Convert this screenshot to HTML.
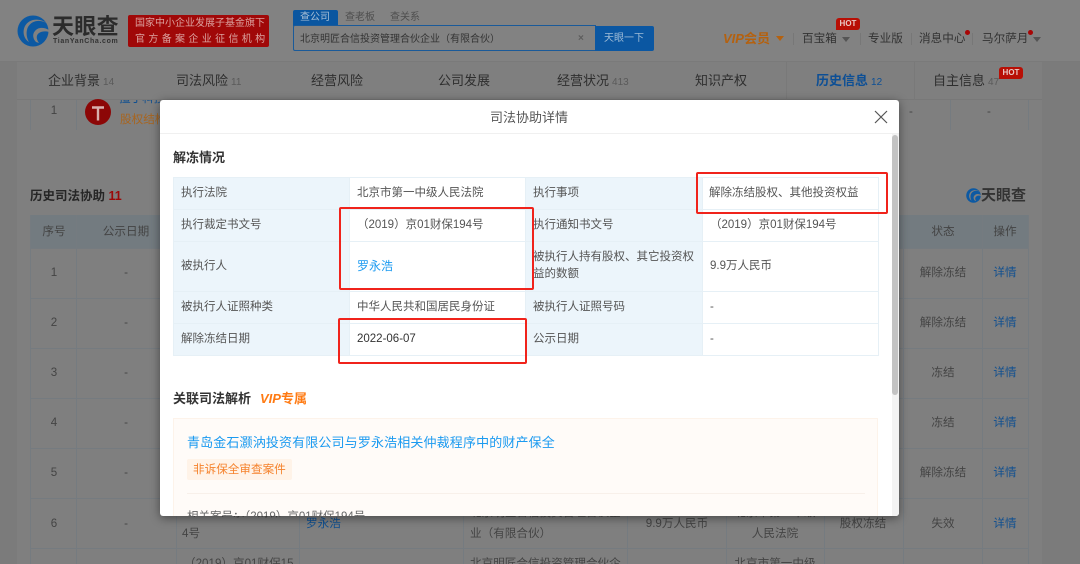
<!DOCTYPE html>
<html lang="zh-CN"><head><meta charset="utf-8"><title>司法协助详情</title>
<style>
*{box-sizing:border-box}
html,body{margin:0;padding:0;background:#f1f1f1}
body{width:1080px;height:564px;overflow:hidden;position:relative;font-family:"Liberation Sans","Noto Sans CJK SC",sans-serif;color:#2e2e2e}
#root{position:absolute;left:0;top:0;width:1080px;height:564px;overflow:hidden;background:#f1f1f1}
.a{position:absolute}
.t{position:absolute;white-space:nowrap;line-height:20px;height:20px;font-size:11.6px;margin-top:1px}
.c{transform:translateX(-50%)}
.l{position:absolute;background:#757b80}
.n{font-size:13px;color:#2e2e2e}
.n small{font-size:10px;color:#5a5a5a;margin-left:3px}
.m{color:#444}
.lk{color:#0f4f90}
.box{position:absolute;border:2px solid #f0231b;border-radius:2px}
.cell{position:absolute;border:1px solid #e6f0f6;font-size:11.5px;color:#555;display:flex;align-items:center;line-height:20px;padding:0 0 1px 7px}
.lab{background:#ecf5fb}
.hot{position:absolute;background:#b80f05;color:#e8c9c5;font-size:8px;font-weight:bold;line-height:12px;height:12px;width:24px;text-align:center;border-radius:3px 3px 3px 0}
.sep{position:absolute;width:1px;height:12px;background:#777;top:33px}
.tri{position:absolute;width:0;height:0;border-left:4px solid transparent;border-right:4px solid transparent;border-top:5px solid #555}
</style></head><body><div id="root">

<!-- page base under the dimming mask -->
<div class="a" style="left:17px;top:62px;width:1025px;height:502px;background:#f9f9f9"></div>
<div class="a" style="left:0;top:0;width:1080px;height:62px;background:#ffffff"></div>
<div class="a" style="left:0;top:0;width:1080px;height:564px;background:rgba(0,0,0,.49)"></div>
<div class="a" style="left:0;top:61px;width:1080px;height:1px;background:#7a7a7a"></div>
<div class="a" style="left:17px;top:99px;width:1025px;height:1px;background:#787878"></div>

<!-- logo -->
<svg class="a" style="left:17px;top:15px" width="32" height="32" viewBox="0 0 32 32">
<circle cx="16" cy="16" r="15.5" fill="#0c59a3"/>
<path d="M31 9C24 4 15 5 11 12c-2 4-2 10 1 15 -5-3-7-10-4-16C12 4 22 2 31 9z" fill="#818181"/>
<path d="M32 15c-5-3-11-3-14 1-3 3-2 8 1 11l3 1c-3-4-3-8 0-10 3-2 7-2 10-1z" fill="#818181"/>
</svg>
<div class="t" style="left:52px;top:15px;font-size:22px;line-height:22px;height:22px;font-weight:bold;color:#2b2b2b;letter-spacing:.3px">天眼查</div>
<div class="t" style="left:53px;top:31px;font-size:7px;font-weight:bold;color:#333;letter-spacing:.65px">TianYanCha.com</div>
<div class="a" style="left:128px;top:15px;width:141px;height:32px;background:#a00808;border-radius:2px"></div>
<div class="t" style="left:135px;top:13px;font-size:10px;color:#dca3a0">国家中小企业发展子基金旗下</div>
<div class="t" style="left:135px;top:29px;font-size:10px;color:#dca3a0;letter-spacing:3.35px">官方备案企业征信机构</div>

<!-- search -->
<div class="a" style="left:293px;top:10px;width:45px;height:16px;background:#0a56a0;border-radius:2px 2px 0 0"></div>
<div class="t" style="left:300px;top:7px;font-size:10px;color:#a9c0d6">查公司</div>
<div class="t" style="left:345px;top:7px;font-size:10px;color:#4e4e4e">查老板</div>
<div class="t" style="left:390px;top:7px;font-size:10px;color:#4e4e4e">查关系</div>
<div class="a" style="left:293px;top:25px;width:303px;height:26px;border:1px solid #1a5a99;border-radius:2px 0 0 2px;background:#828282"></div>
<div class="t" style="left:300px;top:29px;font-size:10px;color:#333">北京明匠合信投资管理合伙企业（有限合伙）</div>
<div class="t" style="left:578px;top:28px;font-size:10px;color:#5d5d5d;font-weight:bold">×</div>
<div class="a" style="left:595px;top:26px;width:59px;height:25px;background:#0b57a2;border-radius:0 2px 2px 0"></div>
<div class="t" style="left:604px;top:28px;font-size:10px;color:#9ebbd6">天眼一下</div>

<!-- header right -->
<div class="t" style="left:723px;top:28px;font-size:13px;font-weight:bold;color:#b4610f"><i>VIP</i>会员</div>
<div class="tri" style="left:776px;top:36px;border-top-color:#b4610f"></div>
<div class="sep" style="left:793px"></div>
<div class="t" style="left:802px;top:28px;color:#333">百宝箱</div>
<div class="tri" style="left:842px;top:37px"></div>
<div class="hot" style="left:836px;top:18px">HOT</div>
<div class="sep" style="left:860px"></div>
<div class="t" style="left:868px;top:28px;color:#333">专业版</div>
<div class="sep" style="left:911px"></div>
<div class="t" style="left:919px;top:28px;color:#333">消息中心</div>
<div class="a" style="left:965px;top:30px;width:5px;height:5px;border-radius:50%;background:#a80505"></div>
<div class="sep" style="left:972px"></div>
<div class="t" style="left:982px;top:28px;color:#333">马尔萨月</div>
<div class="a" style="left:1028px;top:30px;width:5px;height:5px;border-radius:50%;background:#a80505"></div>
<div class="tri" style="left:1033px;top:37px"></div>

<!-- nav -->
<div class="t n" style="left:48px;top:70px">企业背景<small>14</small></div>
<div class="t n" style="left:176px;top:70px">司法风险<small>11</small></div>
<div class="t n" style="left:311px;top:70px">经营风险</div>
<div class="t n" style="left:438px;top:70px">公司发展</div>
<div class="t n" style="left:557px;top:70px">经营状况<small>413</small></div>
<div class="t n" style="left:695px;top:70px">知识产权</div>
<div class="t n" style="left:816px;top:70px;font-weight:bold;color:#0d4f95">历史信息<small style="color:#0d4f95;font-weight:normal">12</small></div>
<div class="t n" style="left:933px;top:70px">自主信息<small>47</small></div>
<div class="hot" style="left:999px;top:67px">HOT</div>
<div class="l" style="left:786px;top:62px;width:1px;height:38px;background:#797979"></div>
<div class="l" style="left:914px;top:62px;width:1px;height:38px;background:#797979"></div>

<!-- top table fragment -->
<div class="l" style="left:30px;top:100px;width:1px;height:30px"></div>
<div class="l" style="left:76px;top:100px;width:1px;height:30px"></div>
<div class="l" style="left:950px;top:100px;width:1px;height:30px"></div>
<div class="l" style="left:1028px;top:100px;width:1px;height:30px"></div>
<div class="t m c" style="left:54px;top:100px">1</div>
<svg class="a" style="left:84px;top:98px" width="28" height="28" viewBox="0 0 28 28"><circle cx="14" cy="14" r="13" fill="#8c0707"/><path d="M8 9.500h12M14 9.500v13" stroke="#d8b0ae" stroke-width="2.400" fill="none"/></svg>
<div class="a" style="left:118px;top:100px;width:42px;height:8px;overflow:hidden"><div class="t" style="left:1px;top:-12px;color:#0f4f90">擅丁科技</div></div>
<div class="t" style="left:120px;top:109px;color:#a8651f">股权结构</div>
<div class="t m" style="left:909px;top:101px">-</div>
<div class="t m" style="left:987px;top:101px">-</div>

<!-- history section -->
<div class="t" style="left:30px;top:185px;font-size:12.5px;font-weight:bold;color:#262626">历史司法协助 <span style="color:#9c0a0a">11</span></div>
<svg class="a" style="left:966px;top:188px" width="15" height="15" viewBox="0 0 32 32"><circle cx="16" cy="16" r="15.5" fill="#0c59a3"/><path d="M31 9C24 4 15 5 11 12c-2 4-2 10 1 15 -5-3-7-10-4-16C12 4 22 2 31 9z" fill="#7f7f7f"/><path d="M32 15c-5-3-11-3-14 1-3 3-2 8 1 11l3 1c-3-4-3-8 0-10 3-2 7-2 10-1z" fill="#7f7f7f"/></svg>
<div class="t" style="left:981px;top:185px;font-size:15px;font-weight:bold;color:#333">天眼查</div>

<!-- history table -->
<div class="a" style="left:30px;top:215px;width:998px;height:33px;background:#737b80"></div>
<div class="l" style="left:30px;top:215px;width:1px;height:349px"></div>
<div class="l" style="left:76px;top:215px;width:1px;height:349px"></div>
<div class="l" style="left:176px;top:215px;width:1px;height:349px"></div>
<div class="l" style="left:299px;top:215px;width:1px;height:349px"></div>
<div class="l" style="left:463px;top:215px;width:1px;height:349px"></div>
<div class="l" style="left:627px;top:215px;width:1px;height:349px"></div>
<div class="l" style="left:726px;top:215px;width:1px;height:349px"></div>
<div class="l" style="left:824px;top:215px;width:1px;height:349px"></div>
<div class="l" style="left:903px;top:215px;width:1px;height:349px"></div>
<div class="l" style="left:982px;top:215px;width:1px;height:349px"></div>
<div class="l" style="left:1028px;top:215px;width:1px;height:349px"></div>
<div class="l" style="left:30px;top:248px;width:998px;height:1px"></div>
<div class="l" style="left:30px;top:298px;width:998px;height:1px"></div>
<div class="l" style="left:30px;top:348px;width:998px;height:1px"></div>
<div class="l" style="left:30px;top:398px;width:998px;height:1px"></div>
<div class="l" style="left:30px;top:448px;width:998px;height:1px"></div>
<div class="l" style="left:30px;top:498px;width:998px;height:1px"></div>
<div class="l" style="left:30px;top:548px;width:998px;height:1px"></div>

<div class="t m c" style="left:54px;top:221px">序号</div>
<div class="t m c" style="left:126px;top:221px">公示日期</div>
<div class="t m c" style="left:943px;top:221px">状态</div>
<div class="t m c" style="left:1005px;top:221px">操作</div>

<div class="t m c" style="left:54px;top:262px">1</div><div class="t m c" style="left:126px;top:262px">-</div><div class="t m c" style="left:943px;top:262px">解除冻结</div><div class="t lk c" style="left:1005px;top:262px">详情</div>
<div class="t m c" style="left:54px;top:312px">2</div><div class="t m c" style="left:126px;top:312px">-</div><div class="t m c" style="left:943px;top:312px">解除冻结</div><div class="t lk c" style="left:1005px;top:312px">详情</div>
<div class="t m c" style="left:54px;top:362px">3</div><div class="t m c" style="left:126px;top:362px">-</div><div class="t m c" style="left:943px;top:362px">冻结</div><div class="t lk c" style="left:1005px;top:362px">详情</div>
<div class="t m c" style="left:54px;top:412px">4</div><div class="t m c" style="left:126px;top:412px">-</div><div class="t m c" style="left:943px;top:412px">冻结</div><div class="t lk c" style="left:1005px;top:412px">详情</div>
<div class="t m c" style="left:54px;top:462px">5</div><div class="t m c" style="left:126px;top:462px">-</div><div class="t m c" style="left:943px;top:462px">解除冻结</div><div class="t lk c" style="left:1005px;top:462px">详情</div>
<div class="t m c" style="left:54px;top:513px">6</div><div class="t m c" style="left:126px;top:513px">-</div><div class="t m c" style="left:943px;top:513px">失效</div><div class="t lk c" style="left:1005px;top:513px">详情</div>

<div class="t m" style="left:184px;top:502px">（2019）京01财保15</div>
<div class="t m" style="left:182px;top:523px">4号</div>
<div class="t lk" style="left:306px;top:513px">罗永浩</div>
<div class="t m" style="left:470px;top:502px">北京明匠合信投资管理合伙企</div>
<div class="t m" style="left:470px;top:523px">业（有限合伙）</div>
<div class="t m c" style="left:677px;top:513px">9.9万人民币</div>
<div class="t m c" style="left:775px;top:502px">北京市第一中级</div>
<div class="t m c" style="left:775px;top:523px">人民法院</div>
<div class="t m c" style="left:863px;top:513px">股权冻结</div>
<div class="t m" style="left:184px;top:553px">（2019）京01财保15</div>
<div class="t m" style="left:470px;top:553px">北京明匠合信投资管理合伙企</div>
<div class="t m c" style="left:775px;top:553px">北京市第一中级</div>

<!-- modal -->
<div class="a" style="left:160px;top:100px;width:739px;height:416px;background:#fff;border-radius:3px;box-shadow:0 2px 10px rgba(0,0,0,.45);overflow:hidden">
 <div class="a" style="left:0;top:33px;width:739px;height:1px;background:#f0f0f0"></div>
 <div class="a" style="left:732px;top:34px;width:7px;height:382px;background:#f3f3f3"></div>
 <div class="a" style="left:732px;top:35px;width:6px;height:260px;background:#c3c3c3;border-radius:3px"></div>
</div>
<div class="t c" style="left:529px;top:107px;font-size:13px;color:#555">司法协助详情</div>
<svg class="a" style="left:874px;top:110px" width="14" height="14" viewBox="0 0 14 14"><path d="M1 1l12 12M13 1L1 13" stroke="#555" stroke-width="1.200" fill="none"/></svg>
<div class="t" style="left:173px;top:147px;font-size:13px;font-weight:bold;color:#333">解冻情况</div>

<!-- detail table -->
<div class="cell lab" style="left:173px;top:177px;width:177px;height:33px">执行法院</div>
<div class="cell" style="left:349px;top:177px;width:177px;height:33px">北京市第一中级人民法院</div>
<div class="cell lab" style="left:525px;top:177px;width:178px;height:33px">执行事项</div>
<div class="cell" style="left:702px;top:177px;width:177px;height:33px;padding-left:6px">解除冻结股权、其他投资权益</div>

<div class="cell lab" style="left:173px;top:209px;width:177px;height:33px">执行裁定书文号</div>
<div class="cell" style="left:349px;top:209px;width:177px;height:33px">（2019）京01财保194号</div>
<div class="cell lab" style="left:525px;top:209px;width:178px;height:33px">执行通知书文号</div>
<div class="cell" style="left:702px;top:209px;width:177px;height:33px">（2019）京01财保194号</div>

<div class="cell lab" style="left:173px;top:241px;width:177px;height:51px">被执行人</div>
<div class="cell" style="left:349px;top:241px;width:177px;height:51px;color:#1b9af0;font-size:12px">罗永浩</div>
<div class="cell lab" style="left:525px;top:241px;width:178px;height:51px;padding-right:6px;line-height:17px">被执行人持有股权、其它投资权益的数额</div>
<div class="cell" style="left:702px;top:241px;width:177px;height:51px">9.9万人民币</div>

<div class="cell lab" style="left:173px;top:291px;width:177px;height:33px">被执行人证照种类</div>
<div class="cell" style="left:349px;top:291px;width:177px;height:33px">中华人民共和国居民身份证</div>
<div class="cell lab" style="left:525px;top:291px;width:178px;height:33px">被执行人证照号码</div>
<div class="cell" style="left:702px;top:291px;width:177px;height:33px">-</div>

<div class="cell lab" style="left:173px;top:323px;width:177px;height:33px">解除冻结日期</div>
<div class="cell" style="left:349px;top:323px;width:177px;height:33px;color:#333">2022-06-07</div>
<div class="cell lab" style="left:525px;top:323px;width:178px;height:33px">公示日期</div>
<div class="cell" style="left:702px;top:323px;width:177px;height:33px">-</div>

<div class="box" style="left:339px;top:207px;width:195px;height:83px"></div>
<div class="box" style="left:338px;top:318px;width:189px;height:46px"></div>
<div class="box" style="left:696px;top:172px;width:192px;height:42px"></div>

<!-- related -->
<div class="t" style="left:173px;top:388px;font-size:13px;font-weight:bold;color:#333">关联司法解析</div>
<div class="t" style="left:260px;top:388px;font-size:13px;font-weight:bold;color:#ff7a12"><i>VIP</i>专属</div>

<div class="a" style="left:160px;top:100px;width:732px;height:416px;overflow:hidden">
 <div class="a" style="left:13px;top:318px;width:705px;height:120px;background:#fffbf8;border:1px solid #fdf3ea"></div>
 <div class="t" style="left:27px;top:332px;font-size:13px;letter-spacing:.14px;color:#1b9af0">青岛金石灏汭投资有限公司与罗永浩相关仲裁程序中的财产保全</div>
 <div class="a" style="left:27px;top:359px;width:105px;height:21px;background:#fff3e8;border-radius:2px"></div>
 <div class="t" style="left:33px;top:359px;font-size:11.6px;color:#f5822c">非诉保全审查案件</div>
 <div class="a" style="left:27px;top:393px;width:678px;height:1px;background:#f8f0ea"></div>
 <div class="t" style="left:27px;top:406px;font-size:11.5px;color:#666">相关案号：（2019）京01财保194号</div>
</div>

</div></body></html>
